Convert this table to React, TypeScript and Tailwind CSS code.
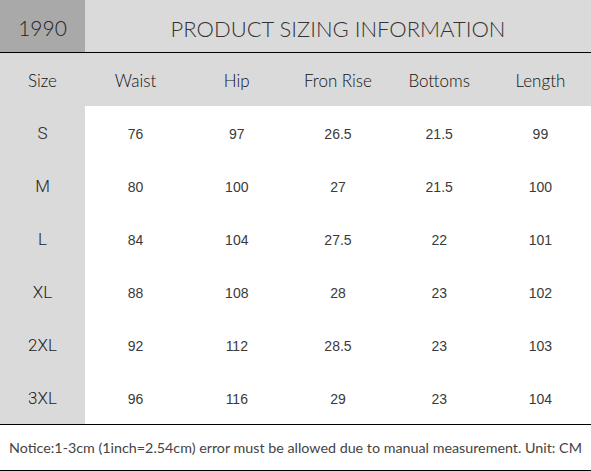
const headers = ["Waist", "Hip", "Fron Rise", "Bottoms", "Length"];

const rows = [
  { size: "S", values: ["76", "97", "26.5", "21.5", "99"] },
  { size: "M", values: ["80", "100", "27", "21.5", "100"] },
  { size: "L", values: ["84", "104", "27.5", "22", "101"] },
  { size: "XL", values: ["88", "108", "28", "23", "102"] },
  { size: "2XL", values: ["92", "112", "28.5", "23", "103"] },
  { size: "3XL", values: ["96", "116", "29", "23", "104"] },
];

export default function App() {
  return (
    <div className="w-[591px] h-[471px] bg-white text-[#333] overflow-hidden">
      {/* title bar */}
      <div className="flex h-[53px] bg-[#dadada] border-b border-black">
        <div className="w-[85px] bg-[#a9a9a9] flex items-center justify-center pt-[4px] font-['Lato',sans-serif] font-light text-[21px] text-[#222]">
          1990
        </div>
        <div className="flex-1 flex items-center justify-center pt-[4px] font-['Lato',sans-serif] font-light text-[22px] text-[#333]">
          PRODUCT SIZING INFORMATION
        </div>
      </div>

      {/* column headings */}
      <div className="grid grid-cols-[85px_repeat(5,1fr)] h-[53px] pt-[3px] bg-[#dadada] font-['Lato',sans-serif] font-light text-[17px] text-[#111]">
        <div className="flex items-center justify-center">Size</div>
        {headers.map((h) => (
          <div key={h} className="flex items-center justify-center">
            {h}
          </div>
        ))}
      </div>

      {/* body */}
      <div className="border-b border-black">
        {rows.map((r) => (
          <div key={r.size} className="grid grid-cols-[85px_repeat(5,1fr)] h-[53px]">
            <div className="bg-[#dadada] flex items-center justify-center pt-[3px] font-['Roboto',sans-serif] font-light text-[17px] text-[#222]">
              {r.size}
            </div>
            {r.values.map((v, i) => (
              <div key={i} className="flex items-center justify-center pt-[3px] font-['Liberation_Sans',sans-serif] text-[14px] text-[#3a3a3a]">
                {v}
              </div>
            ))}
          </div>
        ))}
      </div>

      {/* notice */}
      <div className="h-[46px] border-b border-black flex items-center justify-center pt-[1px] font-['Lato',sans-serif] text-[14.3px] text-[#444]">
        Notice:1-3cm (1inch=2.54cm) error must be allowed due to manual measurement. Unit: CM
      </div>
    </div>
  );
}
